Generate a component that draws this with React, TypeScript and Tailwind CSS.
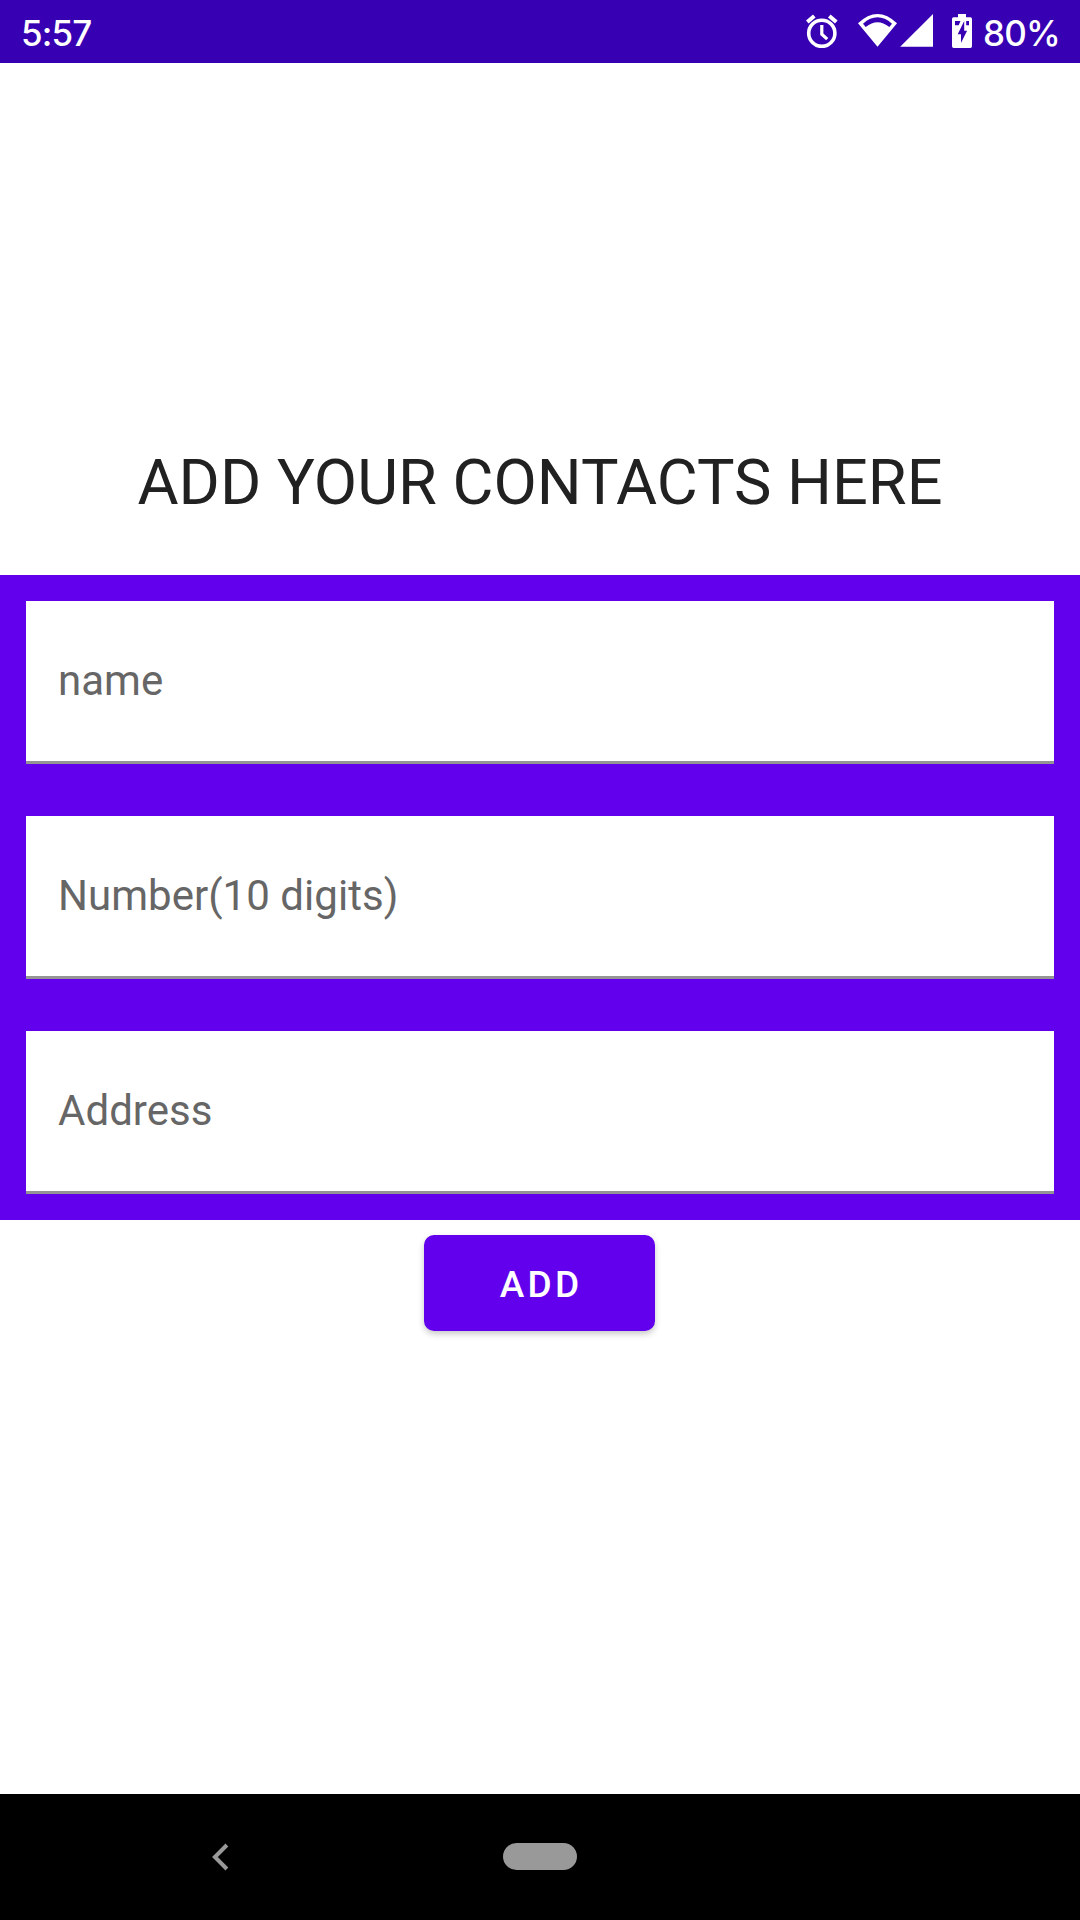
import React from "react";

function Field({ label }: { label: string }) {
  return (
    <div className="flex h-[163px] items-center border-b-[3px] border-[#949494] bg-white pb-[2px] pl-8 text-[42px] tracking-[0.03px] text-[#666666]">
      {label}
    </div>
  );
}

function AlarmIcon() {
  return (
    <svg className="mr-px h-[34px] w-8" viewBox="0 0 32 34" fill="none" stroke="#fff">
      <circle cx="15.8" cy="19.3" r="13.1" strokeWidth="3.6" />
      <path strokeWidth="3.2" d="M15.800 11v9.200l5.400 5" />
      <path strokeWidth="4" d="M1.300 8L8.300 2M30.300 8L23.300 2" />
    </svg>
  );
}

function WifiIcon() {
  return (
    <svg className="ml-[19px] h-[34px] w-[39px]" viewBox="0 0 39 34" fill="#fff">
      <path
        fillRule="evenodd"
        d="M0 9.3Q19.5-9.3 39 9.3L19.5 32.7ZM5 9.7L7.7 13.1Q19.5 3.6 31.3 13.1L34 9.7Q19.5-3 5 9.7Z"
      />
    </svg>
  );
}

function SignalIcon() {
  return (
    <svg className="ml-[3px] h-[34px] w-[33px]" viewBox="0 0 33 34" fill="#fff">
      <path d="M33 0V32.8H.2Z" />
    </svg>
  );
}

function BatteryIcon() {
  return (
    <svg className="ml-[19px] h-[34px] w-5" viewBox="0 0 20 34">
      <path fill="#fff" d="M6 0h8v3.3h4.4Q20 3.3 20 5v27.300q0 1.700-1.700 1.700H1.700Q0 34 0 32.300V5Q0 3.300 1.600 3.300H6Z" />
      <path fill="#3700b3" d="M3 7h5.500L6.700 11.300H3ZM14.200 7H17v4.300h-2.800ZM12.200 7v9.700h2.900L9 29v-8.800H5.700Z" />
    </svg>
  );
}

export default function App() {
  return (
    <div className="flex h-[1920px] w-[1080px] flex-col overflow-hidden bg-white font-['Roboto',sans-serif]">
      <header className="flex h-[63px] items-center justify-between bg-[#3700b3] px-[21px] pb-px font-['Inter',sans-serif] text-[35px] font-[550] text-white">
        <span className="pt-[5px] tracking-[-0.9px]">5:57</span>
        <div className="flex items-center">
          <AlarmIcon />
          <WifiIcon />
          <SignalIcon />
          <BatteryIcon />
          <span className="w-[87px] pt-[5px] pl-[11px] tracking-[-0.8px]">80%</span>
        </div>
      </header>
      <h1 className="mt-[373px] text-center text-[63px] leading-[94px] text-[#212121]">ADD YOUR CONTACTS HERE</h1>
      <main className="mt-[45px] flex h-[645px] flex-col gap-[52px] bg-[#6200ee] p-[26px]">
        <Field label="name" />
        <Field label="Number(10 digits)" />
        <Field label="Address" />
      </main>
      <button className="mt-[15px] ml-[424px] h-24 w-[231px] rounded-[10px] bg-[#6200ee] pt-[3px] pl-[3px] text-[37px] font-medium tracking-[3.3px] text-white shadow-[0_3px_6px_rgba(0,0,0,0.22)]">
        ADD
      </button>
      <footer className="mt-auto grid h-[126px] grid-cols-[212px_291px_1fr] items-center bg-black pb-px">
        <span />
        <svg className="h-7 w-[17px]" viewBox="0 0 17 28" fill="none" stroke="#999" strokeWidth="4">
          <path d="M14.900 2L2.900 14l12 12" />
        </svg>
        <div className="h-[27px] w-[74px] rounded-full bg-[#999]" />
      </footer>
    </div>
  );
}
